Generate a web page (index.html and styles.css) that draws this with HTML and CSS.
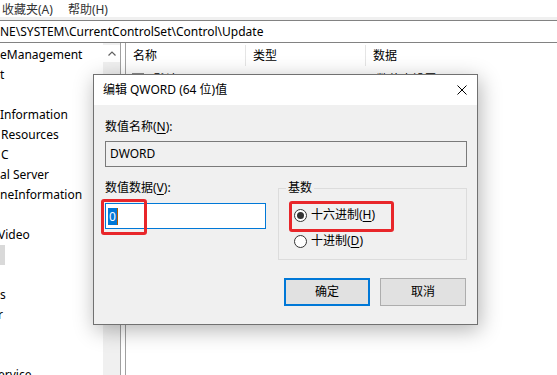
FILE: index.html
```html
<!DOCTYPE html>
<html lang="zh-CN">
<head>
    <meta charset="UTF-8">
    <meta name="viewport" content="width=device-width, initial-scale=1.0">
    <title>编辑 QWORD (64 位)值</title>
    <link rel="stylesheet" href="styles.css">
</head>
<body>
    <div class="menubar">
        <span>收藏夹(A)</span>
        <span>帮助(H)</span>
    </div>

    <div class="addressbar">NE\SYSTEM\CurrentControlSet\Control\Update</div>

    <div class="main">
        <div class="tree">
            <ul class="tree-items">
                <li>eManagement</li>
                <li>t</li>
                <li></li>
                <li>Information</li>
                <li class="indent">Resources</li>
                <li class="indent">C</li>
                <li>al Server</li>
                <li>neInformation</li>
                <li></li>
                <li class="cut">Video</li>
                <li><span class="selected"></span></li>
                <li></li>
                <li>s</li>
                <li class="cut">r</li>
                <li></li>
                <li></li>
                <li class="cut">ervice</li>
            </ul>
            <div class="scrollbar">
                <div class="scroll-up">
                    <svg width="8" height="5" viewBox="0 0 8 5">
                        <path d="M0.5 4.5 L4 1 L7.5 4.5" fill="none" stroke="#606060" stroke-width="1.2"/>
                    </svg>
                </div>
            </div>
        </div>
        <div class="splitter"></div>
        <div class="list">
            <div class="list-head">
                <div class="col col-name">名称</div>
                <div class="col col-type">类型</div>
                <div class="col col-data">数据</div>
            </div>
            <div class="list-row">
                <div class="col col-name">
                    <svg class="reg-icon" width="14" height="14" viewBox="0 0 14 14">
                        <rect x="1.5" y="1.5" width="11" height="11" fill="#fff" stroke="#8a8a8a"/>
                        <text x="3" y="10" font-size="7" fill="#c0392b">ab</text>
                    </svg>
                    (默认)
                </div>
                <div class="col col-type">REG_SZ</div>
                <div class="col col-data">(数值未设置)</div>
            </div>
        </div>
    </div>

    <div class="dialog">
        <div class="titlebar">
            <span>编辑 QWORD (64 位)值</span>
            <svg class="close" width="10" height="10" viewBox="0 0 10 10">
                <path d="M0.5 0.5 L9.5 9.5 M9.5 0.5 L0.5 9.5" stroke="#000" stroke-width="1"/>
            </svg>
        </div>
        <div class="dialog-body">
            <div class="label">数值名称(<u>N</u>):</div>
            <div class="name-box">DWORD</div>

            <div class="data-row">
                <div class="data-col">
                    <div class="label">数值数据(<u>V</u>):</div>
                    <div class="data-input"><span class="sel">0</span></div>
                </div>
                <fieldset class="base">
                    <legend>基数</legend>
                    <div class="radio-row first">
                        <span class="radio on"></span>
                        <span>十六进制(<u>H</u>)</span>
                    </div>
                    <div class="radio-row">
                        <span class="radio"></span>
                        <span>十进制(<u>D</u>)</span>
                    </div>
                </fieldset>
            </div>

            <div class="buttons">
                <div class="btn btn-default">确定</div>
                <div class="btn">取消</div>
            </div>
        </div>

        <!-- 标注框 -->
        <div class="mark mark-value"></div>
        <div class="mark mark-hex"></div>
    </div>
</body>
</html>
```

FILE: styles.css
```css
body {
    margin: 0;
    width: 557px;
    height: 375px;
    overflow: hidden;
    position: relative;
    background: #fff;
    color: #000;
    font-family: "Noto Sans", "Noto Sans CJK SC", sans-serif;
    font-size: 12px;
}
u {
    text-underline-offset: 2px;
}

/* 背景的注册表编辑器 */
.menubar {
    height: 17px;
    border-bottom: 3px solid #f0f0f0;
    display: flex;
    gap: 15px;
    padding-left: 2px;
    line-height: 19px;
    color: #333;
}
.addressbar {
    height: 21px;
    border-top: 1px solid #828282;
    border-bottom: 1px solid #828282;
    line-height: 21px;
    white-space: nowrap;
    overflow: hidden;
}
.main {
    display: flex;
    height: 332px;
}
.tree {
    width: 120px;
    display: flex;
}
.tree-items {
    list-style: none;
    margin: 0;
    padding: 2px 0 0;
    width: 103px;
    overflow: hidden;
}
.tree-items li {
    height: 20px;
    line-height: 20px;
    white-space: nowrap;
}
.tree-items .indent {
    padding-left: 1px;
}
.tree-items .cut {
    margin-left: -2px;
}
.selected {
    display: inline-block;
    width: 5px;
    height: 20px;
    vertical-align: top;
    background: #d9d9d9;
}
.scrollbar {
    width: 17px;
    background: #f0f0f0;
}
.scroll-up {
    height: 17px;
    margin-top: 2px;
    background: #fff;
    display: flex;
    align-items: center;
    justify-content: center;
}
.splitter {
    width: 4px;
    border-left: 1px solid #a0a0a0;
    border-right: 1px solid #a0a0a0;
}
.list {
    flex: 1;
    padding-top: 2px;
}
.list-head, .list-row {
    display: flex;
    height: 21px;
    line-height: 21px;
}
.list-row {
    margin-top: 3px;
    height: 20px;
}
.col {
    padding-left: 7px;
    white-space: nowrap;
    box-sizing: border-box;
}
.col-name { width: 120px; display: flex; align-items: center; gap: 5px; }
.col-type { width: 120px; }
.list-head .col-name, .list-head .col-type {
    border-right: 1px solid #e5e5e5;
}
.reg-icon { margin-left: -2px; }

/* 对话框 */
.dialog {
    position: absolute;
    left: 93px;
    top: 74px;
    width: 385px;
    height: 251px;
    box-sizing: border-box;
    border: 1px solid #717171;
    background: #f0f0f0;
    box-shadow: 2px 5px 20px rgba(0,0,0,0.3);
}
.titlebar {
    height: 30px;
    background: #fff;
    display: flex;
    align-items: center;
    justify-content: space-between;
    padding: 0 10px 0 9px;
    line-height: 16px;
}
.dialog-body {
    padding: 14px 10px 18px 11px;
}
.label {
    height: 16px;
    line-height: 16px;
}
.name-box {
    margin-top: 6px;
    height: 26px;
    box-sizing: border-box;
    border: 1px solid #7a7a7a;
    padding-left: 4px;
    line-height: 24px;
}
.data-row {
    display: flex;
    gap: 12px;
    margin-top: 13px;
    height: 80px;
}
.data-col {
    width: 161px;
}
.data-input {
    margin-top: 7px;
    height: 26px;
    box-sizing: border-box;
    border: 1px solid #0078d7;
    background: #fff;
    padding-left: 2px;
    display: flex;
    align-items: center;
}
.sel {
    background: #0078d7;
    color: #fff;
    height: 17px;
    line-height: 17px;
    padding: 0 1px;
    border-right: 1px solid #b05a00;
}
.base {
    margin: 0;
    padding: 0;
    width: 189px;
    height: 80px;
    box-sizing: border-box;
    border: 1px solid #dcdcdc;
}
.base legend {
    margin-left: 7px;
    padding: 0 2px;
    line-height: 16px;
}
.radio-row {
    display: flex;
    align-items: center;
    gap: 4px;
    height: 16px;
    line-height: 16px;
    margin: 10px 0 0 15px;
}
.radio-row.first {
    margin-top: 11px;
}
.radio {
    width: 13px;
    height: 13px;
    box-sizing: border-box;
    border: 1px solid #333;
    border-radius: 50%;
    background: #fff;
    display: flex;
    align-items: center;
    justify-content: center;
}
.radio.on::after {
    content: "";
    width: 7px;
    height: 7px;
    border-radius: 50%;
    background: #333;
}
.buttons {
    display: flex;
    justify-content: flex-end;
    gap: 10px;
    margin: 18px 1px 0 0;
}
.btn {
    width: 86px;
    height: 28px;
    box-sizing: border-box;
    border: 1px solid #adadad;
    background: #e1e1e1;
    text-align: center;
    line-height: 26px;
}
.btn-default {
    border: 2px solid #0078d7;
    line-height: 24px;
}
.mark {
    position: absolute;
    border: 3px solid #e8262a;
    border-radius: 3px;
    box-sizing: border-box;
}
.mark-value {
    left: 7px;
    top: 124px;
    width: 46px;
    height: 36px;
}
.mark-hex {
    left: 195px;
    top: 126px;
    width: 105px;
    height: 31px;
}
```
